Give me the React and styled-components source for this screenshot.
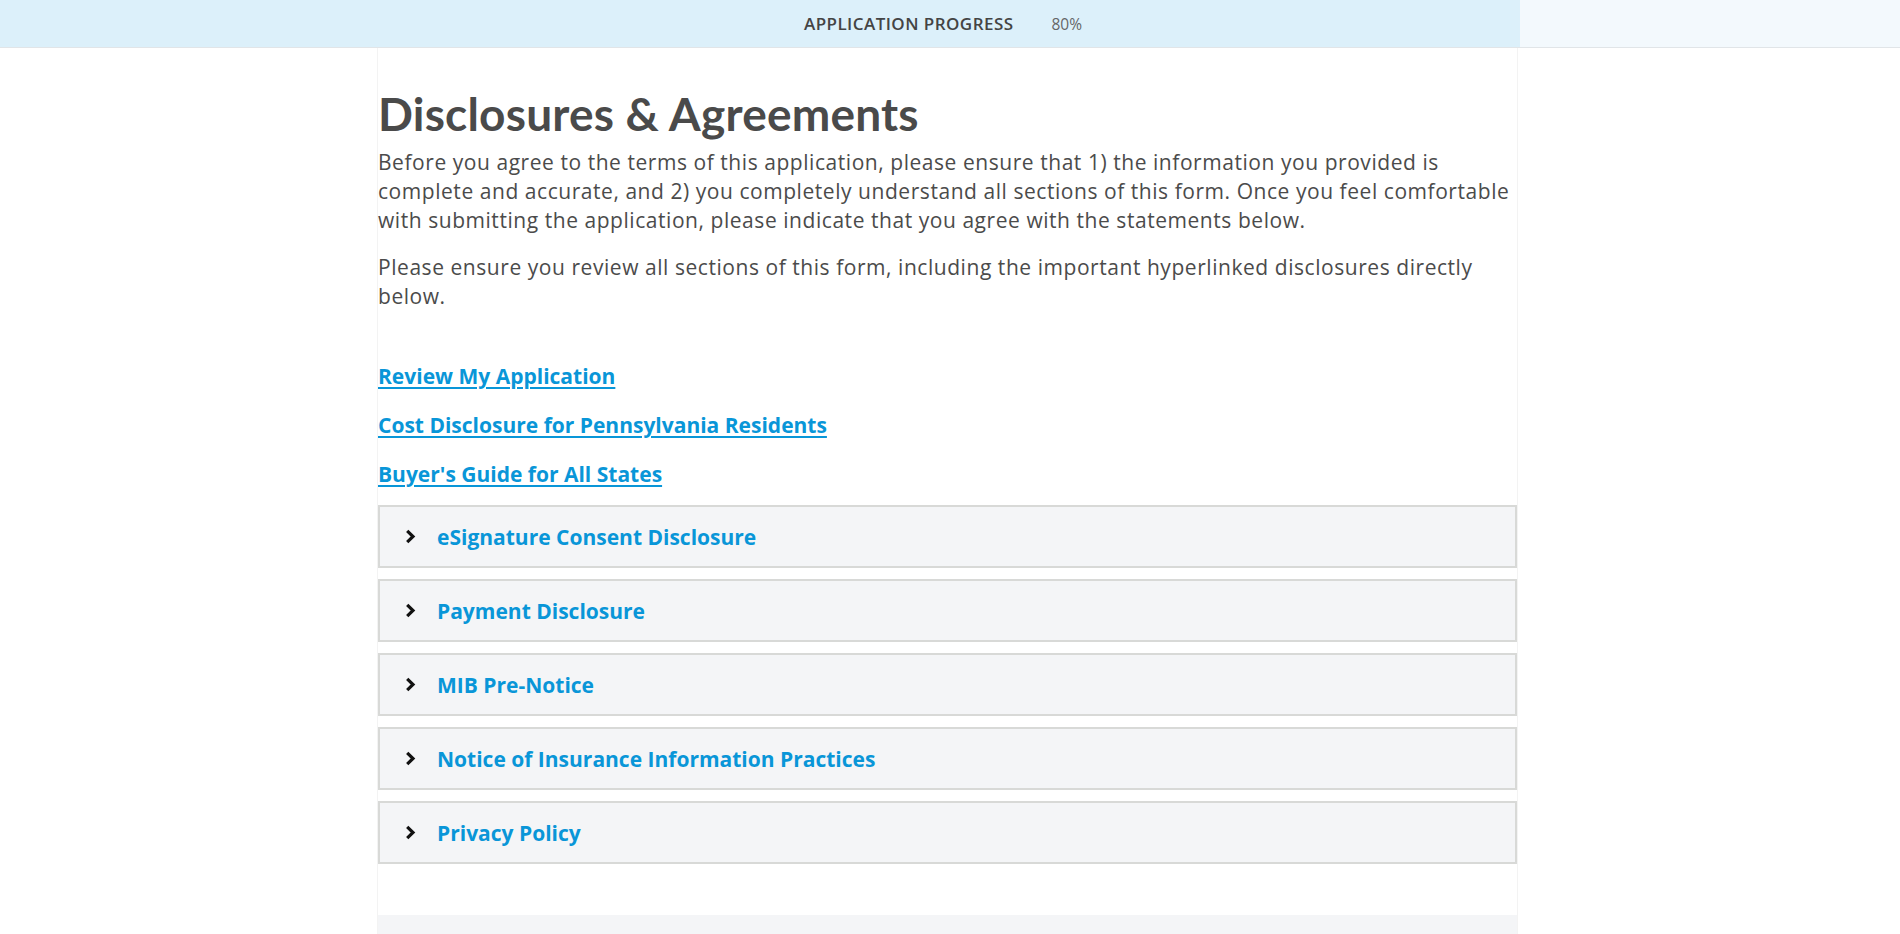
import React from 'react'
import styled, { createGlobalStyle } from 'styled-components'

const GlobalStyle = createGlobalStyle`
  html, body {
    margin: 0;
    padding: 0;
    background: #fff;
    overflow: hidden;
  }
  body {
    font-family: "Open Sans", Lato, "Liberation Sans", sans-serif;
    color: #4a4a4a;
  }
`

const links = [
  'Review My Application',
  'Cost Disclosure for Pennsylvania Residents',
  "Buyer's Guide for All States",
]

const sections = [
  'eSignature Consent Disclosure',
  'Payment Disclosure',
  'MIB Pre-Notice',
  'Notice of Insurance Information Practices',
  'Privacy Policy',
]

const Chevron = () => (
  <svg width="11" height="15" viewBox="0 0 11 15">
    <path d="M2.2 1.8 L8 7.5 L2.2 13.2" fill="none" stroke="#111" strokeWidth="3.2" strokeLinejoin="miter" />
  </svg>
)

const App = () => {
  const progress = 80
  return (
    <>
      <GlobalStyle />
      <ProgressBar
        style={{
          background: `linear-gradient(to right, #dcf0fa ${progress}%, #f3f9fd ${progress}%)`,
        }}
      >
        <span className="label">Application Progress</span>
        <span className="value">{progress}%</span>
      </ProgressBar>
      <Page>
        <Column>
          <Heading>Disclosures &amp; Agreements</Heading>
          <Intro>
            Before you agree to the terms of this application, please ensure that 1) the information you provided is
            <br />
            complete and accurate, and 2) you completely understand all sections of this form. Once you feel comfortable
            <br />
            with submitting the application, please indicate that you agree with the statements below.
          </Intro>
          <Intro>
            Please ensure you review all sections of this form, including the important hyperlinked disclosures directly
            <br />
            below.
          </Intro>
          <LinkList>
            {links.map((l) => (
              <DocLink key={l} href="#">{l}</DocLink>
            ))}
          </LinkList>
          <Accordion>
            {sections.map((s) => (
              <Section key={s}>
                <Chevron />
                <span>{s}</span>
              </Section>
            ))}
          </Accordion>
          <Footer />
        </Column>
      </Page>
    </>
  )
}

const ProgressBar = styled.div`
  height: 47px;
  border-bottom: 1px solid #e1e5e8;
  display: flex;
  align-items: center;
  justify-content: center;
  gap: 38px;
  padding-right: 14px;
  .label {
    font-family: "Open Sans", "Liberation Sans", sans-serif;
    font-weight: 600;
    font-size: 17px;
    letter-spacing: 0.45px;
    text-transform: uppercase;
    color: #444;
  }
  .value {
    font-size: 15.5px;
    color: #666;
  }
`

const Page = styled.div`
  padding-right: 5px;
`

const Column = styled.main`
  width: 1139px;
  margin: 0 auto;
  min-height: 886px;
  border-left: 1px solid #f3f3f3;
  border-right: 1px solid #f3f3f3;
  display: flex;
  flex-direction: column;
`

const Heading = styled.h1`
  margin: 38px 0 6px;
  font-family: Lato, "Open Sans", sans-serif;
  font-weight: 700;
  font-size: 46px;
  line-height: 56px;
  letter-spacing: 0.2px;
  color: #4a4a4a;
`

const Intro = styled.p`
  margin: 0 0 18px;
  font-size: 21px;
  line-height: 29px;
  letter-spacing: 0.55px;
  white-space: nowrap;
  color: #4b4b4b;
`

const LinkList = styled.div`
  display: flex;
  flex-direction: column;
  align-items: flex-start;
  gap: 20px;
  margin-top: 33px;
  margin-bottom: 16px;
`

const DocLink = styled.a`
  font-size: 21px;
  font-weight: 700;
  line-height: 29px;
  color: #0996d8;
  text-decoration: underline;
  text-decoration-thickness: 2px;
  text-underline-offset: 3px;
`

const Accordion = styled.div`
  display: flex;
  flex-direction: column;
  gap: 11px;
`

const Section = styled.div`
  height: 63px;
  box-sizing: border-box;
  border: 2px solid #d8d9d7;
  background: #f4f5f7;
  display: flex;
  align-items: center;
  gap: 21px;
  padding-left: 25px;
  cursor: pointer;
  span {
    font-size: 21px;
    font-weight: 700;
    color: #0996d8;
  }
`

const Footer = styled.footer`
  margin-top: 51px;
  flex: 1;
  min-height: 19px;
  background: #f4f5f7;
`

export default App
